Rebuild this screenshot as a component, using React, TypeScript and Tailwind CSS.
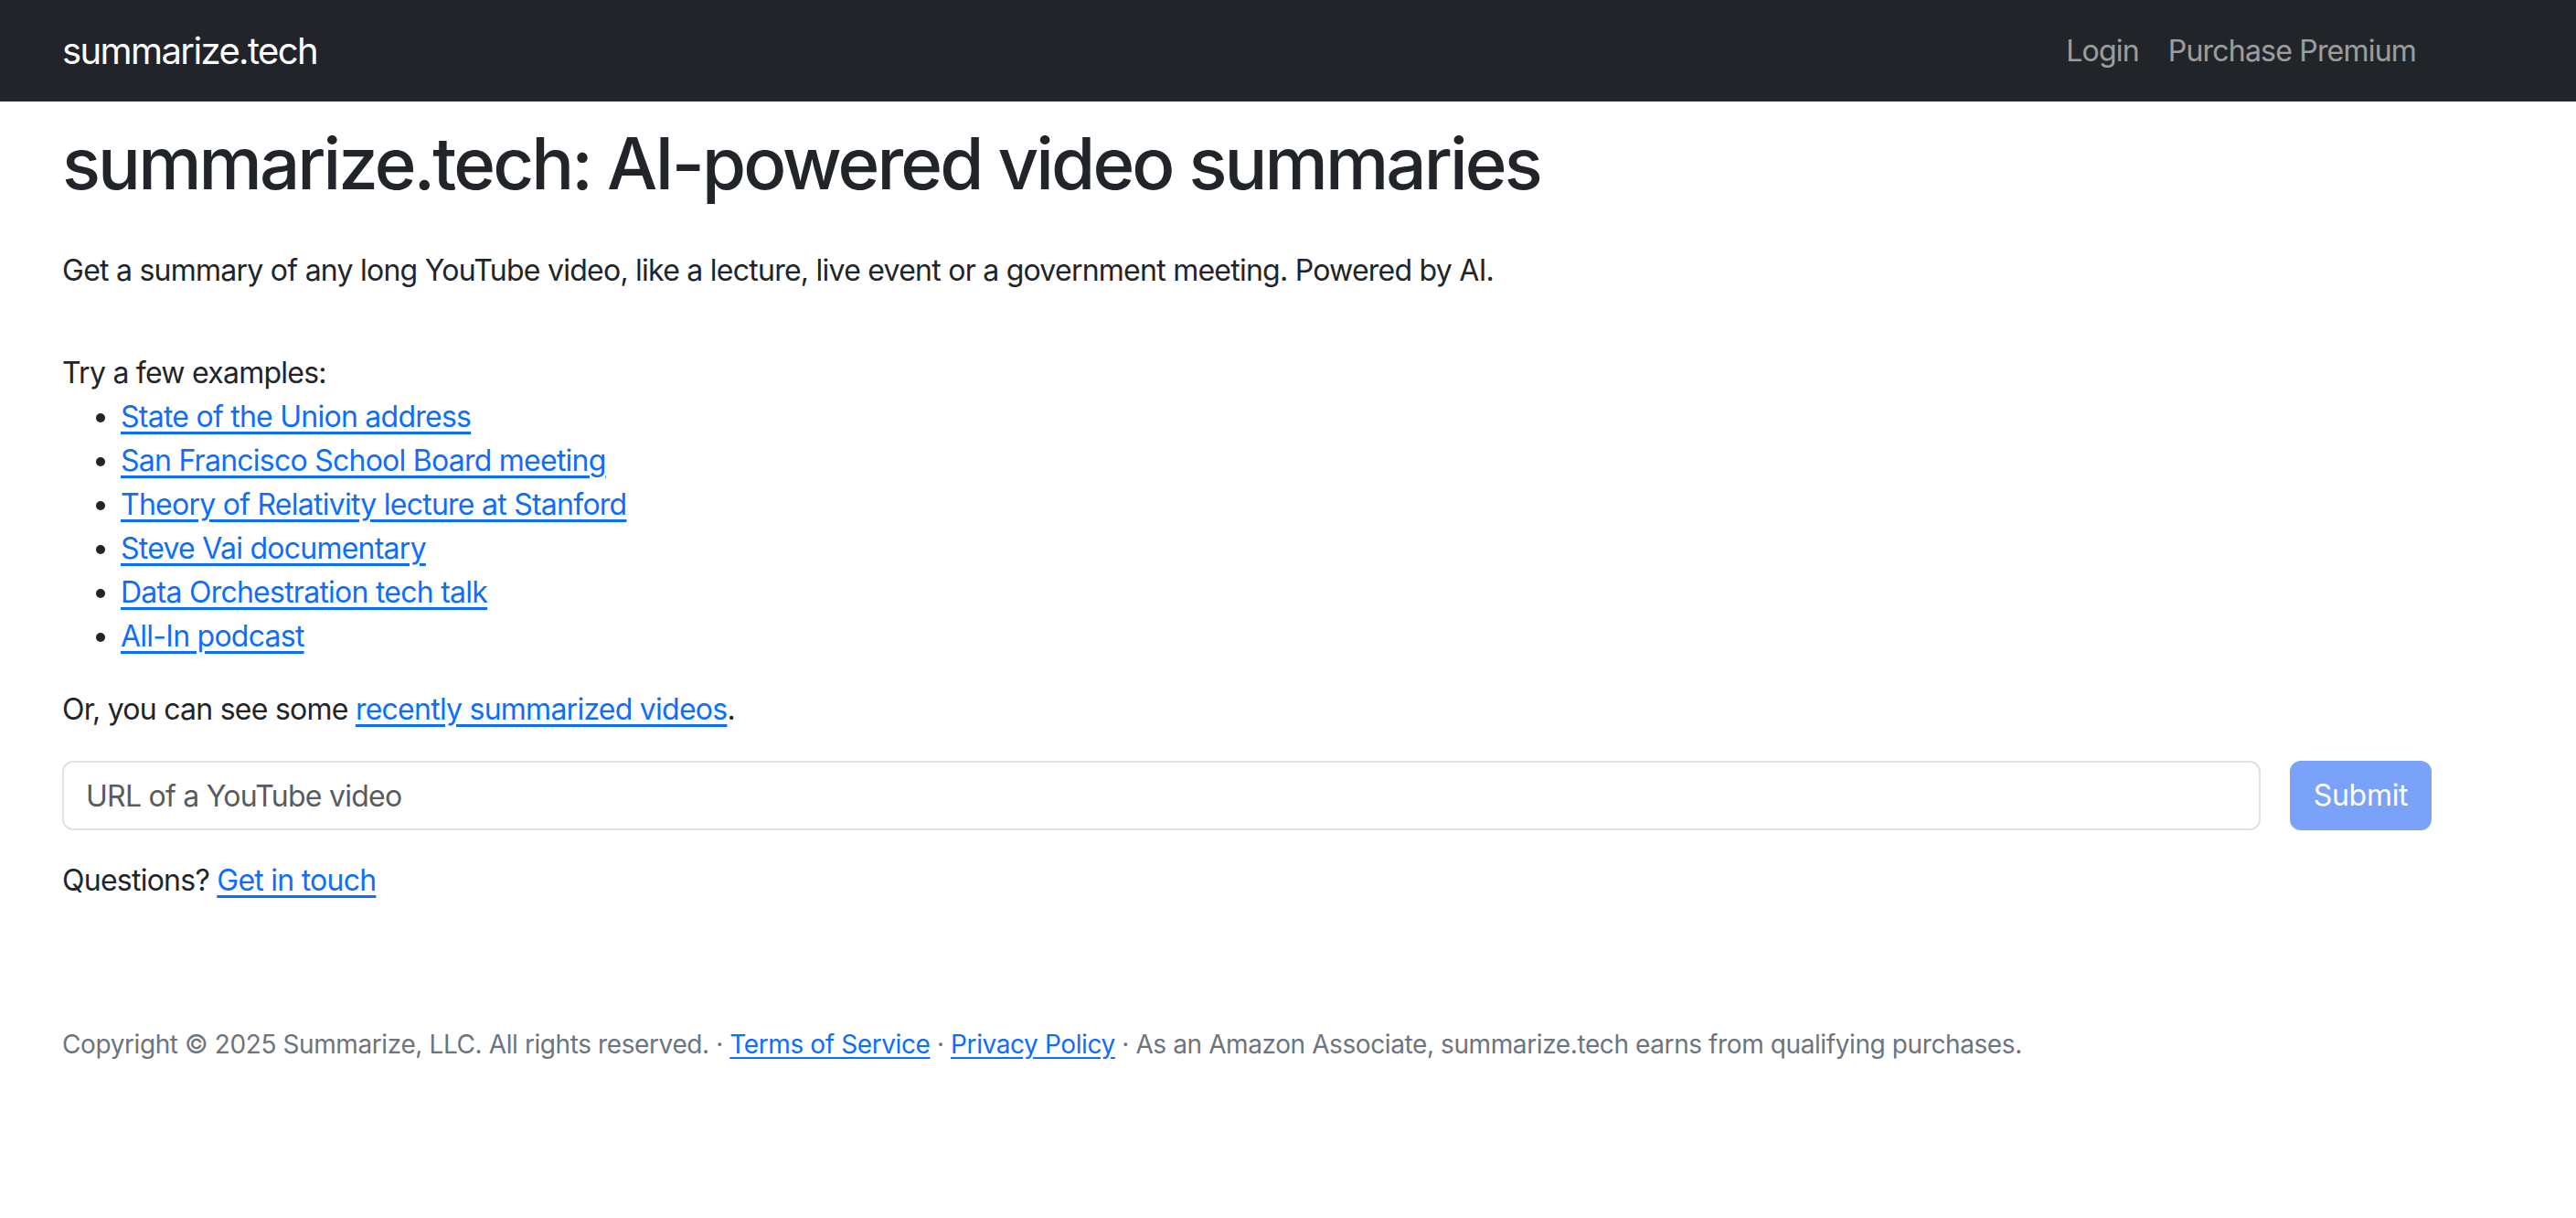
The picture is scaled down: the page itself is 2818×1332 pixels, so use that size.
import React from "react";

const font = { fontFamily: "Inter, 'Noto Sans', sans-serif" };

export default function App() {
  return (
    <div className="min-h-[1332px] bg-white text-[#212529]" style={font}>
      <nav className="h-[111px] bg-[#212529] flex items-center">
        <div className="w-[2592px] ml-[68px] flex items-center justify-between">
          <span className="text-[40px] text-white leading-[60px] tracking-[-1.6px]">summarize.tech</span>
          <div className="flex items-center mr-[1px]">
            <a className="px-[16px] text-[32px] leading-[48px] text-white/55 tracking-[-0.8px]">Login</a>
            <a className="px-[16px] text-[32px] leading-[48px] text-white/55 tracking-[-0.8px]">Purchase Premium</a>
          </div>
        </div>
      </nav>
      <main className="ml-[68px] w-[2592px] text-[32px] leading-[48px] tracking-[-0.75px]">
        <h1 className="pt-[20px] text-[78px] leading-[96px] font-medium tracking-[-2.9px]">
          summarize.tech: AI-powered video summaries
        </h1>
        <p className="mt-[45px]">
          Get a summary of any long YouTube video, like a lecture, live event or a government meeting. Powered by AI.
        </p>
        <p className="mt-[64px]">Try a few examples:</p>
        <ul className="list-disc pl-[64px] mb-[32px]">
          <li><a className="text-[#0d6efd] underline underline-offset-[5px]">State of the Union address</a></li>
          <li><a className="text-[#0d6efd] underline underline-offset-[5px]">San Francisco School Board meeting</a></li>
          <li><a className="text-[#0d6efd] underline underline-offset-[5px]">Theory of Relativity lecture at Stanford</a></li>
          <li><a className="text-[#0d6efd] underline underline-offset-[5px]">Steve Vai documentary</a></li>
          <li><a className="text-[#0d6efd] underline underline-offset-[5px]">Data Orchestration tech talk</a></li>
          <li><a className="text-[#0d6efd] underline underline-offset-[5px]">All-In podcast</a></li>
        </ul>
        <p>
          Or, you can see some <a className="text-[#0d6efd] underline underline-offset-[5px]">recently summarized videos</a>.
        </p>
        <div className="mt-[32px] flex items-stretch gap-[32px]">
          <input
            className="flex-1 h-[76px] border-2 border-[#dee2e6] rounded-[12px] px-[24px] text-[32px] tracking-[-0.75px] placeholder:text-[#595c5f] outline-none"
            placeholder="URL of a YouTube video"
            style={font}
          />
          <button className="w-[155px] h-[76px] rounded-[12px] bg-[#7aa2f9] text-white text-[32px] tracking-[-0.3px]" style={font}>
            Submit
          </button>
        </div>
        <p className="mt-[31px]">
          Questions? <a className="text-[#0d6efd] underline underline-offset-[5px]">Get in touch</a>
        </p>
        <footer className="mt-[134px] text-[28px] leading-[42px] text-[#6c757d] tracking-[-0.4px]">
          Copyright © 2025 Summarize, LLC. All rights reserved. ·{" "}
          <a className="text-[#0d6efd] underline underline-offset-[4px]">Terms of Service</a> ·{" "}
          <a className="text-[#0d6efd] underline underline-offset-[4px]">Privacy Policy</a> · As an Amazon Associate, summarize.tech earns from qualifying purchases.
        </footer>
      </main>
    </div>
  );
}
